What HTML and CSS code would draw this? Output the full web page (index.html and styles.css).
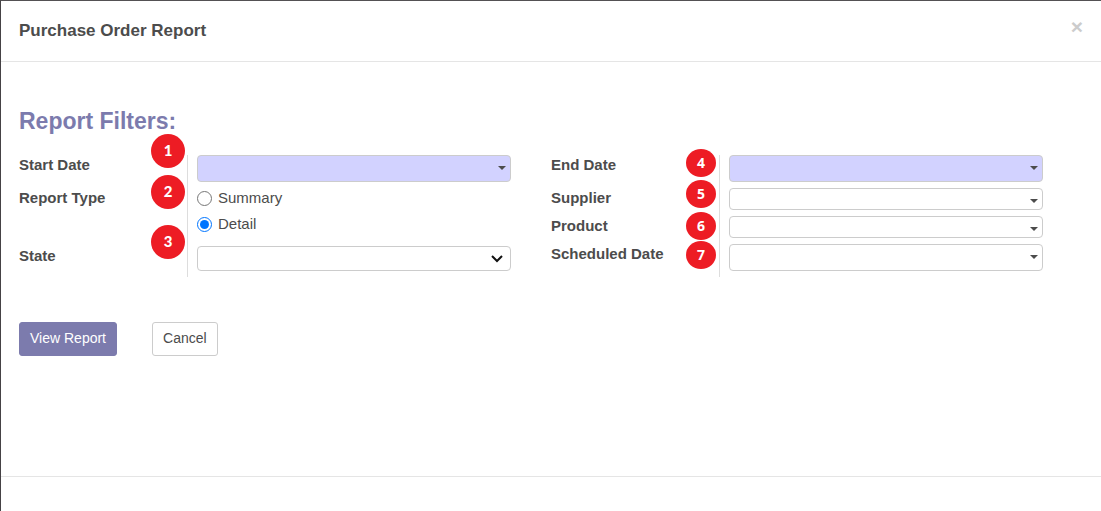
FILE: index.html
```
<!DOCTYPE html>
<html lang="en">
<head>
  <meta charset="UTF-8">
  <meta name="viewport" content="width=device-width, initial-scale=1.0">
  <title>Purchase Order Report</title>
  <link rel="stylesheet" href="styles.css">
</head>
<body>
  <div class="modal" role="dialog" aria-labelledby="modalTitle">
    <header class="modal-header">
      <h1 class="modal-title" id="modalTitle">Purchase Order Report</h1>
      <button type="button" class="close" aria-label="Close">×</button>
    </header>

    <form class="modal-body">
      <h2 class="group-title">Report Filters:</h2>
      <div class="filters">
        <!-- left group -->
        <div class="group">
          <div class="row">
            <div class="row-label">
              <label for="startDate">Start Date</label>
              <span class="badge badge-1">1</span>
            </div>
            <div class="field">
              <input type="text" id="startDate" class="control required">
              <svg class="caret" viewBox="0 0 8 4"><path d="M0 0h8L4 4z"/></svg>
            </div>
          </div>
          <div class="row">
            <div class="row-label">
              <span id="typeLabel">Report Type</span>
              <span class="badge badge-2">2</span>
            </div>
            <div class="radios" role="radiogroup" aria-labelledby="typeLabel">
              <label class="radio"><input type="radio" name="type" value="summary">Summary</label>
              <label class="radio"><input type="radio" name="type" value="detail" checked>Detail</label>
            </div>
          </div>
          <div class="row">
            <div class="row-label">
              <label for="state">State</label>
              <span class="badge badge-3">3</span>
            </div>
            <div class="field">
              <select id="state" class="control control-select"><option></option></select>
              <svg class="chevron" viewBox="0 0 12 8"><path d="M1 1l5 5 5-5"/></svg>
            </div>
          </div>
        </div>

        <!-- right group -->
        <div class="group">
          <div class="row">
            <div class="row-label">
              <label for="endDate">End Date</label>
              <span class="badge badge-small badge-4">4</span>
            </div>
            <div class="field">
              <input type="text" id="endDate" class="control required">
              <svg class="caret" viewBox="0 0 8 4"><path d="M0 0h8L4 4z"/></svg>
            </div>
          </div>
          <div class="row">
            <div class="row-label">
              <label for="supplier">Supplier</label>
              <span class="badge badge-small badge-5">5</span>
            </div>
            <div class="field">
              <input type="text" id="supplier" class="control control-short">
              <svg class="caret" viewBox="0 0 8 4"><path d="M0 0h8L4 4z"/></svg>
            </div>
          </div>
          <div class="row">
            <div class="row-label">
              <label for="product">Product</label>
              <span class="badge badge-small badge-6">6</span>
            </div>
            <div class="field">
              <input type="text" id="product" class="control control-short">
              <svg class="caret" viewBox="0 0 8 4"><path d="M0 0h8L4 4z"/></svg>
            </div>
          </div>
          <div class="row">
            <div class="row-label">
              <label for="scheduledDate">Scheduled Date</label>
              <span class="badge badge-small badge-7">7</span>
            </div>
            <div class="field">
              <input type="text" id="scheduledDate" class="control">
              <svg class="caret" viewBox="0 0 8 4"><path d="M0 0h8L4 4z"/></svg>
            </div>
          </div>
        </div>
      </div>

      <div class="actions">
        <button type="button" class="btn btn-primary">View Report</button>
        <button type="button" class="btn">Cancel</button>
      </div>
    </form>

    <footer class="modal-footer"></footer>
  </div>
</body>
</html>
```
FILE: styles.css
```
* {
  box-sizing: border-box;
}
body {
  margin: 0;
  font-family: "Liberation Sans", Arial, sans-serif;
  font-size: 15px;
  line-height: 20px;
  color: #4c4c4c;
  background: #fff;
}

/* modal */
.modal {
  display: flex;
  flex-direction: column;
  min-height: 100vh;
  border-top: 1px solid #545154;
  border-left: 1px solid #454245;
}
.modal-header {
  display: flex;
  justify-content: space-between;
  align-items: flex-start;
  padding: 16px 18px;
  border-bottom: 1px solid #e5e5e5;
}
.modal-title {
  margin: 0;
  font-size: 17px;
  line-height: 28px;
}
.close {
  padding: 0;
  border: 0;
  background: none;
  font-family: inherit;
  font-size: 21px;
  font-weight: bold;
  line-height: 20px;
  color: #ccc;
  cursor: pointer;
}
.modal-body {
  flex: 1;
  padding: 44px 58px 0 18px;
}
.modal-footer {
  height: 35px;
  border-top: 1px solid #e5e5e5;
}

/* filters */
.group-title {
  margin: 0 0 18px;
  font-size: 23px;
  line-height: 31px;
  color: #7c7bad;
}
.filters {
  display: grid;
  grid-template-columns: 1fr 1fr;
  column-gap: 40px;
}
.row {
  display: grid;
  grid-template-columns: 169px 1fr;
}
.row-label {
  position: relative;
  border-right: 1px solid #ddd;
  font-weight: bold;
}
.field {
  position: relative;
  margin: 0 0 6px 9px;
}
.control {
  display: block;
  width: 100%;
  height: 27px;
  padding: 2px 24px 2px 6px;
  border: 1px solid #ccc;
  border-radius: 4px;
  background: #fff;
  font: inherit;
  color: inherit;
}
.control-short {
  height: 22px;
}
.control-select {
  height: 25px;
  appearance: none;
}
.required {
  background: #d2d2ff;
}
.caret {
  position: absolute;
  right: 5px;
  top: 11px;
  width: 8px;
  height: 4px;
  fill: #4c4c4c;
  pointer-events: none;
}
.chevron {
  position: absolute;
  right: 8px;
  top: 9px;
  width: 12px;
  height: 8px;
  fill: none;
  stroke: #111;
  stroke-width: 2;
  pointer-events: none;
}
.radios {
  margin-left: 9px;
  padding-bottom: 6px;
}
.radio {
  display: flex;
  align-items: center;
  gap: 6px;
  margin-bottom: 6px;
}
.radio input {
  width: 15px;
  height: 15px;
  margin: 0;
}

/* numbered markers */
.badge {
  position: absolute;
  right: 2px;
  width: 34px;
  height: 34px;
  border-radius: 50%;
  background: #ed1c24;
  font-family: Lato, sans-serif;
  font-size: 15px;
  font-weight: 900;
  line-height: 32px;
  text-align: center;
  color: #fff;
}
.badge-small {
  right: 3px;
  width: 30px;
  height: 28px;
  font-family: "Open Sans", sans-serif;
  font-size: 14px;
  font-weight: bold;
  line-height: 28px;
}
.badge-1 { top: -21px; }
.badge-2 { top: -13px; }
.badge-3 { top: -21px; }
.badge-4 { top: -6px; }
.badge-5 { top: -8px; }
.badge-6 { top: -4px; }
.badge-7 { top: -3px; }

/* buttons */
.actions {
  display: flex;
  gap: 35px;
  margin-top: 45px;
}
.btn {
  height: 34px;
  padding: 0 10px 2px;
  border: 1px solid #ccc;
  border-radius: 3px;
  background: #fff;
  font-family: inherit;
  font-size: 14px;
  color: #4c4c4c;
  cursor: pointer;
}
.btn-primary {
  border-color: #7c7bad;
  background: #7c7bad;
  color: #fff;
}
```
